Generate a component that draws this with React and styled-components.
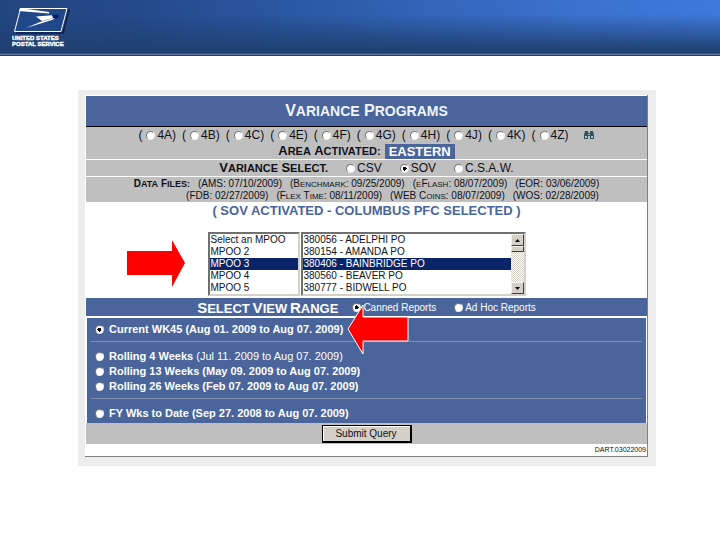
import React from "react"
import styled, { createGlobalStyle } from "styled-components"

const GlobalStyle = createGlobalStyle`
  * {
    box-sizing: border-box;
  }

  body {
    margin: 0;
    background: #fff;
    color: #101018;
    font-family: "Liberation Sans", Arial, sans-serif;
    font-size: 12px;
  }
`

//Banner
const Banner = styled.header`
  height: 56px;
  padding: 7px 12px 0;
  border-bottom: 1px solid #24406c;
  background: linear-gradient(
      to bottom,
      rgba(31, 64, 112, 0) 25%,
      rgba(31, 64, 112, 0.95) 90%,
      rgba(31, 64, 112, 0.95) 97%,
      #62779f 98%
    ),
    linear-gradient(to right, #23457f 0%, #24498a 18%, #2c5ba8 45%, #3b72cf 80%, #3f79da 100%);
`

const Logo = styled.svg`
  display: block;
`

const LogoName = styled.text`
  font: bold 6px "Liberation Sans", Arial, sans-serif;
  fill: #fff;
  stroke: #fff;
  stroke-width: 0.4px;
`

//Form shell
const Page = styled.main`
  margin: 34px 64px 0 78px;
  padding: 5px 8px 9px 7px;
  background: #ededed;
`

const Form = styled.form`
  padding: 1px 0 0 1px;
  border-right: 1px solid #808080;
  border-bottom: 1px solid #808080;
  background: #fff;
`

const TitleBar = styled.h1`
  margin: 0;
  border-bottom: 1px solid #000;
  background: #4a659b;
  color: #f0f5ff;
  font-size: 16px;
  line-height: 30px;
  text-align: center;
`

const Band = styled.section`
  display: flex;
  flex-wrap: wrap;
  align-items: center;
  justify-content: center;
  padding: ${props => props.$pad || "0"};
  margin-bottom: ${props => (props.$last ? 0 : 1)}px;
  background: #bfbfbf;
`

const Row = styled.div`
  display: flex;
  align-items: ${props => props.$align || "center"};
  justify-content: center;
  flex-basis: 100%;
  gap: ${props => props.$gap}px;
  padding-left: ${props => props.$indent || 0}px;
  font-size: ${props => props.$size || 12}px;
  line-height: ${props => props.$line}px;
  white-space: pre;
`

//Small capitals with a larger first letter
const Lead = styled.span`
  font-size: ${props => props.$big}px;
`

const Rest = styled.span`
  font-size: ${props => props.$small}px;
  line-height: 1;
`

const Heading = styled.span`
  font-weight: bold;
`

const Caps = ({ text, big, small }) =>
  text.split(" ").map((word, i) => (
    <React.Fragment key={word}>
      {i > 0 && " "}
      <Lead $big={big}>{word[0]}</Lead>
      <Rest $small={small}>{word.slice(1)}</Rest>
    </React.Fragment>
  ))

const Highlight = styled.strong`
  padding: 0 4px;
  background: #4a659b;
  color: #fff;
  font-size: 13px;
`

//Radios
const RadioLabel = styled.label`
  display: inline-flex;
  align-items: center;
  gap: ${props => props.$gap || 2}px;
`

const Paren = styled.span`
  padding-right: 2px;
`

const Radio = styled.input.attrs({ type: "radio" })`
  appearance: none;
  width: 9px;
  height: 9px;
  margin: 0;
  border: 1px solid;
  border-color: #777 #eee #eee #777;
  border-radius: 50%;
  background: #fff;

  &:checked {
    background: radial-gradient(circle, #000 0 2px, #fff 2px);
  }
`

const Status = styled.p`
  margin: 0;
  color: #4a659b;
  font-size: 13px;
  font-weight: bold;
  line-height: 18px;
  text-align: center;
`

//List boxes
const Lists = styled.div`
  display: flex;
  justify-content: center;
  gap: 1px;
  padding: 12px 0 2px;
`

const ListFrame = styled.div`
  display: flex;
  width: ${props => props.$width}px;
  border: 2px solid;
  border-color: #707070 #d4d0c8 #d4d0c8 #707070;
  background: #fff;
`

const ListBox = styled.select`
  flex: 1;
  min-width: 0;
  height: 60px;
  padding: 0;
  border: 0;
  border-radius: 0;
  outline: 0;
  overflow: hidden;
  background: #fff;
  color: #101018;
  font: 10px "Liberation Sans", Arial, sans-serif;

  option {
    height: 12px;
    min-height: 12px;
    padding: 0 1px;
    line-height: 12px;
  }

  option:checked {
    background: #0a246a linear-gradient(#0a246a, #0a246a);
    color: #fff;
    -webkit-text-fill-color: #fff;
  }
`

const ScrollBar = styled.div`
  display: flex;
  flex-direction: column;
  justify-content: space-between;
  width: 13px;
  background: repeating-conic-gradient(#d4d0c8 0 25%, #fff 0 50%) 0 0 / 2px 2px;
`

const ScrollPart = styled.button`
  display: flex;
  align-items: center;
  justify-content: center;
  width: 100%;
  height: ${props => props.$height}px;
  padding: 0;
  border: 1px solid;
  border-color: #f4f2ee #404040 #404040 #f4f2ee;
  background: #d4d0c8;
`

//View range
const RangeBar = styled.div`
  display: flex;
  align-items: center;
  justify-content: center;
  gap: 14px;
  height: 18px;
  background: #4a659b;
  color: #fff;
  font-size: 10px;
`

const RangeChoices = styled.div`
  display: flex;
  gap: 18px;
`

const Options = styled.div`
  margin: 2px 1px 0;
  padding: 4px 4px 2px;
  background: #4a659b;
`

const OptionGroup = styled.div`
  padding: 7px 4px 4px;
  border-top: 1px solid #8492ab;

  &:first-child {
    padding: 0 4px 4px;
    border-top: 0;
  }

  &:last-child {
    padding-bottom: 0;
  }
`

const Option = styled(RadioLabel)`
  display: flex;
  color: #fff;
  font-size: 11px;
  font-weight: bold;
  line-height: 15px;
  white-space: pre;
`

const Light = styled.span`
  font-weight: normal;
`

const Submit = styled.button`
  width: 90px;
  height: 18px;
  padding: 0;
  border: 1px solid #000;
  border-right-width: 2px;
  border-bottom-width: 2px;
  background: #d4d0c8;
  box-shadow: inset 1px 1px #fff;
  color: #101018;
  font: 10px "Liberation Sans", Arial, sans-serif;
`

const Version = styled.footer`
  padding-right: 1px;
  font-size: 7px;
  line-height: 12px;
  text-align: right;
`

const Finder = styled.svg`
  margin-left: 8px;
`

const Arrow = styled.svg`
  position: absolute;
  left: ${props => props.$left}px;
  top: ${props => props.$top}px;
`

const areas = ["4A", "4B", "4C", "4E", "4F", "4G", "4H", "4J", "4K", "4Z"]
const programs = ["CSV", "SOV", "C.S.A.W."]
const groups = ["Select an MPOO", "MPOO 2", "MPOO 3", "MPOO 4", "MPOO 5"]
const offices = [
  "380056 - ADELPHI PO",
  "380154 - AMANDA PO",
  "380406 - BAINBRIDGE PO",
  "380560 - BEAVER PO",
  "380777 - BIDWELL PO",
]

const UspsLogo = () => (
  <Logo width="60" height="42" viewBox="0 0 60 42">
    <path d="M10 3H57L51 26H4" fill="none" stroke="#0c1f45" strokeWidth="1.500" />
    <path d="M8.500 1.500H55L49 24.500H2.500Z" fill="#22488c" stroke="#fff" />
    <path d="M8 1L37 5V6.500L7 4Z" fill="#fff" />
    <path d="M24 9.500L44 8L46 10L30 14Z" fill="#fff" />
    <path d="M46 10L40 13L14 21L28 15Z" fill="#fff" />
    <path d="M40 8L46 7.500L47 10L44 12L41 11Z" fill="#0b1a6c" />
    <LogoName x="0" y="33">UNITED STATES</LogoName>
    <LogoName x="0" y="39">POSTAL SERVICE</LogoName>
  </Logo>
)

const Binoculars = () => (
  <Finder width="12" height="10" viewBox="0 0 12 10" aria-hidden="true">
    <path d="M2 1h3v2h2V1h3l1 4v4H7V6H5v3H1V5z" fill="#35525c" />
    <path d="M2 6h2v2H2zM8 6h2v2H8zM5 4h2v1H5z" fill="#a8c4cc" />
  </Finder>
)

const List = ({ label, items, width, children }) => (
  <ListFrame $width={width}>
    <ListBox size={5} aria-label={label} defaultValue={items[2]}>
      {items.map(item => (
        <option key={item}>{item}</option>
      ))}
    </ListBox>
    {children}
  </ListFrame>
)

export default function App() {
  return (
    <>
      <GlobalStyle />
      <Banner>
        <UspsLogo />
      </Banner>
      <Page>
        <Form onSubmit={e => e.preventDefault()}>
          <TitleBar>
            <Caps text="VARIANCE PROGRAMS" big={16} small={14} />
          </TitleBar>
          <Band>
            <Row $gap={6} $line={16}>
              {areas.map(area => (
                <RadioLabel key={area}>
                  <Paren>(</Paren>
                  <Radio name="area" />
                  <span>{area})</span>
                </RadioLabel>
              ))}
              <Binoculars />
            </Row>
            <Row $gap={4} $line={15}>
              <Heading>
                <Caps text="AREA ACTIVATED:" big={13} small={11} />
              </Heading>
              <Highlight>EASTERN</Highlight>
            </Row>
          </Band>
          <Band>
            <Row $gap={18} $line={15}>
              <Heading>
                <Caps text="VARIANCE SELECT." big={13} small={11} />
              </Heading>
              {programs.map(name => (
                <RadioLabel key={name}>
                  <Radio name="program" defaultChecked={name === "SOV"} />
                  {name}
                </RadioLabel>
              ))}
            </Row>
          </Band>
          <Band $pad="1px 0 0" $last>
            <Row $gap={8} $size={10} $line={12} $align="baseline">
              <Heading>
                <Caps text="DATA FILES:" big={10} small={9} />
              </Heading>
              <span>(AMS: 07/10/2009)</span>
              <span>
                (B<Rest $small={8}>ENCHMARK</Rest>: 09/25/2009)
              </span>
              <span>
                (<Rest $small={8}>E</Rest>F<Rest $small={8}>LASH</Rest>: 08/07/2009)
              </span>
              <span>(EOR: 03/06/2009)</span>
            </Row>
            <Row $gap={8} $size={10} $line={12} $indent={52} $align="baseline">
              <span>(FDB: 02/27/2009)</span>
              <span>
                (F<Rest $small={8}>LEX</Rest> T<Rest $small={8}>IME</Rest>: 08/11/2009)
              </span>
              <span>
                (WEB C<Rest $small={8}>OINS</Rest>: 08/07/2009)
              </span>
              <span>(WOS: 02/28/2009)</span>
            </Row>
          </Band>
          <Status>( SOV ACTIVATED - COLUMBUS PFC SELECTED )</Status>
          <Lists>
            <List label="MPOO" items={groups} width={92} />
            <List label="Post office" items={offices} width={225}>
              <ScrollBar>
                <div>
                  <ScrollPart type="button" $height={12} aria-label="Scroll up">
                    <svg width="5" height="3" viewBox="0 0 5 3">
                      <path d="M0 3L2.500 0L5 3z" />
                    </svg>
                  </ScrollPart>
                  <ScrollPart as="div" $height={6} />
                </div>
                <ScrollPart type="button" $height={12} aria-label="Scroll down">
                  <svg width="5" height="3" viewBox="0 0 5 3">
                    <path d="M0 0L2.500 3L5 0z" />
                  </svg>
                </ScrollPart>
              </ScrollBar>
            </List>
          </Lists>
          <RangeBar>
            <Heading>
              <Caps text="SELECT VIEW RANGE" big={15} small={13} />
            </Heading>
            <RangeChoices>
              <RadioLabel>
                <Radio name="report" defaultChecked />
                Canned Reports
              </RadioLabel>
              <RadioLabel>
                <Radio name="report" />
                Ad Hoc Reports
              </RadioLabel>
            </RangeChoices>
          </RangeBar>
          <Options>
            <OptionGroup>
              <Option $gap={5}>
                <Radio name="range" defaultChecked />
                Current WK45 (Aug 01. 2009 to Aug 07. 2009)
              </Option>
            </OptionGroup>
            <OptionGroup>
              <Option $gap={5}>
                <Radio name="range" />
                <span>
                  Rolling 4 Weeks <Light>(Jul 11. 2009 to Aug 07. 2009)</Light>
                </span>
              </Option>
              <Option $gap={5}>
                <Radio name="range" />
                Rolling 13 Weeks (May 09. 2009 to Aug 07. 2009)
              </Option>
              <Option $gap={5}>
                <Radio name="range" />
                Rolling 26 Weeks (Feb 07. 2009 to Aug 07. 2009)
              </Option>
            </OptionGroup>
            <OptionGroup>
              <Option $gap={5}>
                <Radio name="range" />
                FY Wks to Date (Sep 27. 2008 to Aug 07. 2009)
              </Option>
            </OptionGroup>
          </Options>
          <Band $pad="2px 0 1px" $last>
            <Submit type="submit">Submit Query</Submit>
          </Band>
          <Version>DART.03022009</Version>
        </Form>
      </Page>
      <Arrow $left={127} $top={240} width="60" height="48" viewBox="0 0 60 48" aria-hidden="true">
        <path d="M0 11H45V0L58 23L45 47V35H0z" fill="#f00" />
      </Arrow>
      <Arrow $left={347} $top={302} width="64" height="54" viewBox="0 0 64 54" aria-hidden="true">
        <path d="M1 27L16 3V15H61V39H16V52z" fill="#f00" stroke="#fff" />
      </Arrow>
    </>
  )
}
